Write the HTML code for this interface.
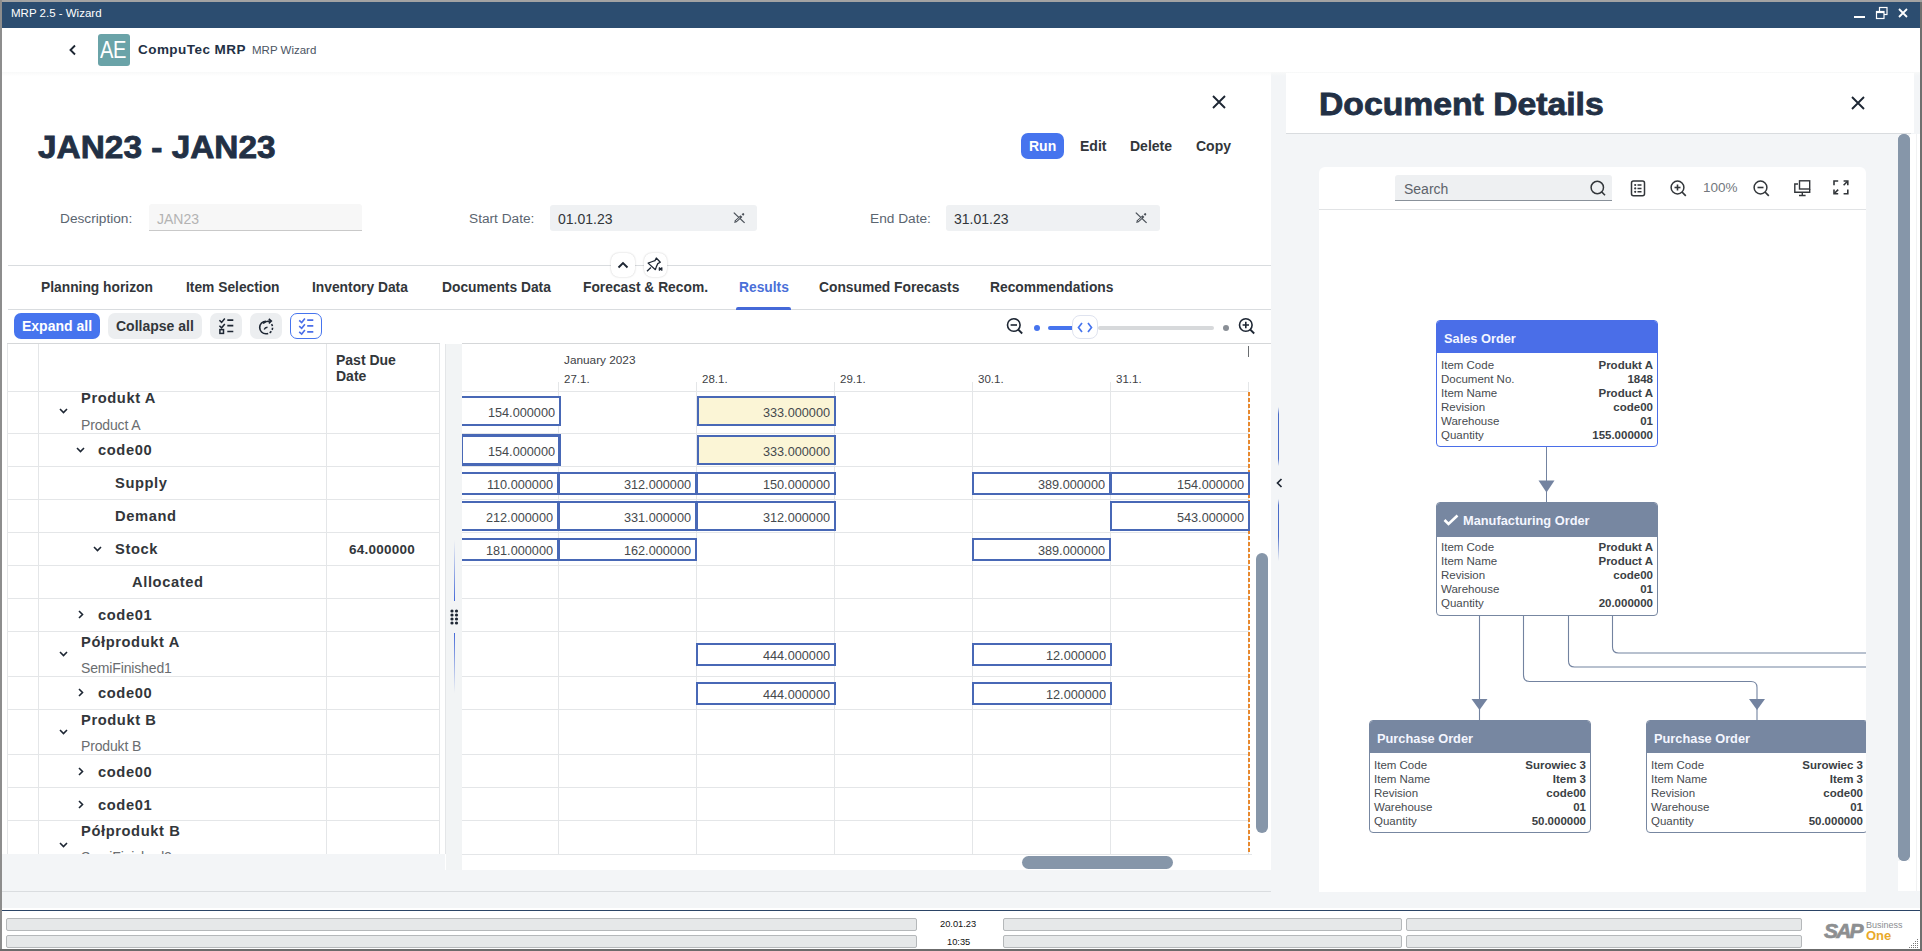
<!DOCTYPE html>
<html><head><meta charset="utf-8"><style>
*{box-sizing:border-box;margin:0;padding:0}
html,body{width:1922px;height:951px;overflow:hidden;background:#fff;font-family:"Liberation Sans",sans-serif;color:#32363a}
.a{position:absolute}
.t{position:absolute;white-space:nowrap;line-height:1}
.tr{position:absolute;white-space:nowrap;line-height:1;text-align:right}
svg{position:absolute;overflow:visible}
</style></head><body>
<div class="a" style="left:0px;top:0px;width:1922px;height:951px;background:#9b9b9b"></div>
<div class="a" style="left:2px;top:2px;width:1918px;height:26px;background:#2c4d70"></div>
<div class="t" style="left:11px;top:8px;font-size:11.5px;color:#fff">MRP 2.5 - Wizard</div>
<div class="a" style="left:1854px;top:16px;width:11px;height:2px;background:#fff"></div>
<svg style="left:1876px;top:7px" width="12" height="12"><rect x="3.5" y="0.5" width="7.5" height="7" fill="none" stroke="#fff" stroke-width="1.2"/><rect x="0.5" y="4.5" width="7.5" height="7" fill="#2c4d70" stroke="#fff" stroke-width="1.2"/><rect x="0.5" y="4.5" width="7.5" height="1.6" fill="#fff"/></svg>
<svg style="left:1898px;top:8px" width="10" height="10"><path d="M1 1L9 9M9 1L1 9" stroke="#fff" stroke-width="1.8"/></svg>
<div class="a" style="left:2px;top:28px;width:1918px;height:923px;background:#fff"></div>
<svg style="left:68px;top:44px" width="10" height="12"><path d="M7 1.5L2.5 6L7 10.5" fill="none" stroke="#1d2633" stroke-width="1.9"/></svg>
<div class="a" style="left:98px;top:34px;width:32px;height:32px;background:#6aa3a8;border-radius:3px"></div>
<div class="t" style="left:100px;top:38px;font-size:24.5px;color:#fff;letter-spacing:-0.5px;transform:scaleX(0.82);transform-origin:0 0;font-weight:normal">AE</div>
<div class="t" style="left:138px;top:43.2px;font-size:13.5px;font-weight:bold;color:#223045;letter-spacing:0.45px">CompuTec MRP</div>
<div class="t" style="left:252px;top:44.6px;font-size:11.5px;color:#4b5563">MRP Wizard</div>
<div class="a" style="left:2px;top:72px;width:1918px;height:836px;background:#f3f5f7"></div>
<div class="a" style="left:2px;top:72px;width:1269px;height:798px;background:#fff"></div>
<div class="a" style="left:2px;top:72px;width:1918px;height:4px;background:linear-gradient(#f8f9f9,rgba(255,255,255,0))"></div>
<svg style="left:1212px;top:95px" width="14" height="14"><path d="M1 1L13 13M13 1L1 13" stroke="#1d2633" stroke-width="1.9"/></svg>
<div class="t" style="left:37.5px;top:132.4px;font-size:30.5px;font-weight:bold;color:#223045;-webkit-text-stroke:0.8px #223045;transform:scaleX(1.095);transform-origin:0 0">JAN23 - JAN23</div>
<div class="a" style="left:1021px;top:133px;width:43px;height:26px;background:#4674ee;border-radius:7px"></div>
<div class="t" style="left:1029px;top:139.2px;font-size:14px;font-weight:bold;color:#fff">Run</div>
<div class="t" style="left:1080px;top:139.2px;font-size:14px;font-weight:bold;color:#32363a">Edit</div>
<div class="t" style="left:1130px;top:139.2px;font-size:14px;font-weight:bold;color:#32363a">Delete</div>
<div class="t" style="left:1196px;top:139.2px;font-size:14px;font-weight:bold;color:#32363a">Copy</div>
<div class="t" style="left:60px;top:212px;font-size:13.7px;color:#5b6570">Description:</div>
<div class="a" style="left:149px;top:204px;width:213px;height:27px;background:#f7f7f7;border-bottom:1px solid #c9c9c9;border-radius:3px 3px 0 0"></div>
<div class="t" style="left:157px;top:212px;font-size:14px;color:#b3b3b3">JAN23</div>
<div class="t" style="left:469px;top:212px;font-size:13.7px;color:#5b6570">Start Date:</div>
<div class="a" style="left:550px;top:205px;width:207px;height:26px;background:#eff1f3;border-radius:3px"></div>
<div class="t" style="left:558px;top:212px;font-size:14px;color:#32363a">01.01.23</div>
<div class="t" style="left:870px;top:212px;font-size:13.7px;color:#5b6570">End Date:</div>
<div class="a" style="left:946px;top:205px;width:214px;height:26px;background:#eff1f3;border-radius:3px"></div>
<div class="t" style="left:954px;top:212px;font-size:14px;color:#32363a">31.01.23</div>
<svg style="left:733px;top:212px" width="13" height="12"><path d="M0.8 0.6L11.6 10.9" stroke="#4a5058" stroke-width="1.3"/><path d="M1.2 11L1.8 8.4L7.6 3.2L9.4 4.9L3.6 10.3Z" fill="#4a5058"/><path d="M8.6 2.3L9.5 1.4Q10.3 0.8 11 1.5Q11.6 2.2 11 3L10.2 3.8Z" fill="#4a5058"/><path d="M2.8 9.2L6.8 5.6" stroke="#eff1f3" stroke-width="0.8"/></svg>
<svg style="left:1135px;top:212px" width="13" height="12"><path d="M0.8 0.6L11.6 10.9" stroke="#4a5058" stroke-width="1.3"/><path d="M1.2 11L1.8 8.4L7.6 3.2L9.4 4.9L3.6 10.3Z" fill="#4a5058"/><path d="M8.6 2.3L9.5 1.4Q10.3 0.8 11 1.5Q11.6 2.2 11 3L10.2 3.8Z" fill="#4a5058"/><path d="M2.8 9.2L6.8 5.6" stroke="#eff1f3" stroke-width="0.8"/></svg>
<div class="a" style="left:8px;top:265px;width:1263px;height:1px;background:#d9dcdf"></div>
<div class="a" style="left:611px;top:253px;width:24px;height:24px;background:#fff;border-radius:8px;box-shadow:0 0 2px rgba(0,0,0,0.22)"></div>
<svg style="left:617px;top:261px" width="12" height="8"><path d="M1.5 6.5L6 2L10.5 6.5" fill="none" stroke="#1d2633" stroke-width="1.9"/></svg>
<div class="a" style="left:644px;top:253px;width:23px;height:24px;background:#fff;border-radius:8px;box-shadow:0 0 2px rgba(0,0,0,0.22)"></div>
<svg style="left:646px;top:257px" width="19" height="16"><path d="M2.1 6.1Q6 4.6 9 3.6L10.3 1L14.3 5.2L11.8 6.6Q10.3 9.2 9.4 12.7Z" fill="none" stroke="#1d2633" stroke-width="1.25" stroke-linejoin="round"/><path d="M1 14.3L4.9 10.5" stroke="#1d2633" stroke-width="1.3"/><path d="M12.8 10.6L16.4 13.4M16.4 10.6L12.8 13.4" stroke="#1d2633" stroke-width="1.4"/></svg>
<div class="t" style="left:41px;top:281.2px;font-size:13.8px;font-weight:bold;color:#32363a">Planning horizon</div>
<div class="t" style="left:186px;top:281.2px;font-size:13.8px;font-weight:bold;color:#32363a">Item Selection</div>
<div class="t" style="left:312px;top:281.2px;font-size:13.8px;font-weight:bold;color:#32363a">Inventory Data</div>
<div class="t" style="left:442px;top:281.2px;font-size:13.8px;font-weight:bold;color:#32363a">Documents Data</div>
<div class="t" style="left:583px;top:281.2px;font-size:13.8px;font-weight:bold;color:#32363a">Forecast &amp; Recom.</div>
<div class="t" style="left:739px;top:281.2px;font-size:13.8px;font-weight:bold;color:#4a6fd8">Results</div>
<div class="t" style="left:819px;top:281.2px;font-size:13.8px;font-weight:bold;color:#32363a">Consumed Forecasts</div>
<div class="t" style="left:990px;top:281.2px;font-size:13.8px;font-weight:bold;color:#32363a">Recommendations</div>
<div class="a" style="left:8px;top:309px;width:1263px;height:1px;background:#d9dcdf"></div>
<div class="a" style="left:736px;top:307px;width:55px;height:3px;background:#4569d8;border-radius:2px 2px 0 0"></div>
<div class="a" style="left:14px;top:313px;width:86px;height:26px;background:#4674ee;border-radius:7px"></div>
<div class="t" style="left:22px;top:319px;font-size:14px;font-weight:bold;color:#fff">Expand all</div>
<div class="a" style="left:108px;top:313px;width:94px;height:26px;background:#eceef0;border-radius:7px"></div>
<div class="t" style="left:116px;top:319px;font-size:14px;font-weight:bold;color:#32363a">Collapse all</div>
<div class="a" style="left:210px;top:313px;width:32px;height:26px;background:#eceef0;border-radius:7px"></div>
<div class="a" style="left:250px;top:313px;width:32px;height:26px;background:#eceef0;border-radius:7px"></div>
<div class="a" style="left:290px;top:313px;width:32px;height:26px;background:#fff;border:1px solid #4674ee;border-radius:7px"></div>
<svg style="left:218px;top:318px" width="17" height="17"><path d="M1.4 2.3L3.6 4.4L6.8 0.5M1.4 7.7L3.6 9.8L6.8 5.9" fill="none" stroke="#1d2633" stroke-width="1.5"/><rect x="1.9" y="11.6" width="3.6" height="3.8" fill="none" stroke="#1d2633" stroke-width="1.5"/><path d="M9.3 2.1H15.3M9.3 7.6H15.3M9.3 13.5H15.3" stroke="#1d2633" stroke-width="1.7"/></svg>
<svg style="left:258px;top:318px" width="17" height="17"><path d="M8 3.2A6.3 6.3 0 0 0 8 15.8" fill="none" stroke="#1d2633" stroke-width="1.6"/><path d="M8 15.8A6.3 6.3 0 0 0 13.5 6" fill="none" stroke="#1d2633" stroke-width="1.6" stroke-dasharray="2.2 1.6"/><path d="M5 5.5Q7.5 3 12.5 3" fill="none" stroke="#1d2633" stroke-width="1.6"/><path d="M10.8 0.8L13.3 3L10.8 5.3" fill="none" stroke="#1d2633" stroke-width="1.6"/><path d="M6.2 11.5Q7 9.5 9.5 9.2" fill="none" stroke="#1d2633" stroke-width="1.4"/></svg>
<svg style="left:298px;top:318px" width="17" height="17"><path d="M1.2 2.4L3.7 4.6L6.9 0.6M1.2 8.1L3.7 10.3L6.9 6.3M1.2 13.8L3.7 16L6.9 12" fill="none" stroke="#4a6ee8" stroke-width="1.6"/><path d="M9.2 2.1H15.3M9.2 7.9H15.3M9.2 13.8H15.3" stroke="#4a6ee8" stroke-width="1.7"/></svg>
<div class="a" style="left:7px;top:344px;width:439px;height:510px;background:#fff"></div>
<div class="a" style="left:7px;top:343px;width:433px;height:1px;background:#d5d7d9"></div>
<div class="a" style="left:7px;top:344px;width:1px;height:510px;background:#e4e6e8"></div>
<div class="a" style="left:38px;top:344px;width:1px;height:510px;background:#e4e6e8"></div>
<div class="a" style="left:326px;top:344px;width:1px;height:510px;background:#e4e6e8"></div>
<div class="a" style="left:439px;top:344px;width:1px;height:510px;background:#e4e6e8"></div>
<div class="a" style="left:445px;top:344px;width:1px;height:510px;background:#e4e6e8"></div>
<div class="t" style="left:336px;top:353px;font-size:14px;font-weight:bold;color:#32363a">Past Due</div>
<div class="t" style="left:336px;top:369px;font-size:14px;font-weight:bold;color:#32363a">Date</div>
<div class="a" style="left:7px;top:391px;width:433px;height:1px;background:#e4e6e8"></div>
<div class="a" style="left:7px;top:433px;width:433px;height:1px;background:#e4e6e8"></div>
<div class="a" style="left:7px;top:466px;width:433px;height:1px;background:#e4e6e8"></div>
<div class="a" style="left:7px;top:499px;width:433px;height:1px;background:#e4e6e8"></div>
<div class="a" style="left:7px;top:532px;width:433px;height:1px;background:#e4e6e8"></div>
<div class="a" style="left:7px;top:565px;width:433px;height:1px;background:#e4e6e8"></div>
<div class="a" style="left:7px;top:598px;width:433px;height:1px;background:#e4e6e8"></div>
<div class="a" style="left:7px;top:631px;width:433px;height:1px;background:#e4e6e8"></div>
<div class="a" style="left:7px;top:676px;width:433px;height:1px;background:#e4e6e8"></div>
<div class="a" style="left:7px;top:709px;width:433px;height:1px;background:#e4e6e8"></div>
<div class="a" style="left:7px;top:754px;width:433px;height:1px;background:#e4e6e8"></div>
<div class="a" style="left:7px;top:787px;width:433px;height:1px;background:#e4e6e8"></div>
<div class="a" style="left:7px;top:820px;width:433px;height:1px;background:#e4e6e8"></div>
<div class="t" style="left:81px;top:391.2px;font-size:14.7px;font-weight:bold;color:#32363a;letter-spacing:0.6px">Produkt A</div>
<div class="t" style="left:81px;top:418.1px;font-size:14px;color:#6a6d70;letter-spacing:-0.15px">Product A</div>
<svg style="left:59px;top:408px" width="9" height="6"><path d="M1 1L4.5 4.5L8 1" fill="none" stroke="#1d2633" stroke-width="1.6"/></svg>
<div class="t" style="left:98px;top:442.6px;font-size:14.7px;font-weight:bold;color:#32363a;letter-spacing:0.6px">code00</div>
<svg style="left:76px;top:447px" width="9" height="6"><path d="M1 1L4.5 4.5L8 1" fill="none" stroke="#1d2633" stroke-width="1.6"/></svg>
<div class="t" style="left:115px;top:475.6px;font-size:14.7px;font-weight:bold;color:#32363a;letter-spacing:0.6px">Supply</div>
<div class="t" style="left:115px;top:508.6px;font-size:14.7px;font-weight:bold;color:#32363a;letter-spacing:0.6px">Demand</div>
<div class="t" style="left:115px;top:541.6px;font-size:14.7px;font-weight:bold;color:#32363a;letter-spacing:0.6px">Stock</div>
<svg style="left:93px;top:546px" width="9" height="6"><path d="M1 1L4.5 4.5L8 1" fill="none" stroke="#1d2633" stroke-width="1.6"/></svg>
<div class="t" style="left:132px;top:574.6px;font-size:14.7px;font-weight:bold;color:#32363a;letter-spacing:0.6px">Allocated</div>
<div class="t" style="left:98px;top:607.6px;font-size:14.7px;font-weight:bold;color:#32363a;letter-spacing:0.6px">code01</div>
<svg style="left:78px;top:610px" width="6" height="9"><path d="M1 1L4.5 4.5L1 8" fill="none" stroke="#1d2633" stroke-width="1.6"/></svg>
<div class="t" style="left:81px;top:634.6px;font-size:14.7px;font-weight:bold;color:#32363a;letter-spacing:0.6px">Półprodukt A</div>
<div class="t" style="left:81px;top:661.1px;font-size:14px;color:#6a6d70;letter-spacing:-0.15px">SemiFinished1</div>
<svg style="left:59px;top:651px" width="9" height="6"><path d="M1 1L4.5 4.5L8 1" fill="none" stroke="#1d2633" stroke-width="1.6"/></svg>
<div class="t" style="left:98px;top:685.6px;font-size:14.7px;font-weight:bold;color:#32363a;letter-spacing:0.6px">code00</div>
<svg style="left:78px;top:688px" width="6" height="9"><path d="M1 1L4.5 4.5L1 8" fill="none" stroke="#1d2633" stroke-width="1.6"/></svg>
<div class="t" style="left:81px;top:712.6px;font-size:14.7px;font-weight:bold;color:#32363a;letter-spacing:0.6px">Produkt B</div>
<div class="t" style="left:81px;top:739.1px;font-size:14px;color:#6a6d70;letter-spacing:-0.15px">Produkt B</div>
<svg style="left:59px;top:729px" width="9" height="6"><path d="M1 1L4.5 4.5L8 1" fill="none" stroke="#1d2633" stroke-width="1.6"/></svg>
<div class="t" style="left:98px;top:764.6px;font-size:14.7px;font-weight:bold;color:#32363a;letter-spacing:0.6px">code00</div>
<svg style="left:78px;top:767px" width="6" height="9"><path d="M1 1L4.5 4.5L1 8" fill="none" stroke="#1d2633" stroke-width="1.6"/></svg>
<div class="t" style="left:98px;top:797.6px;font-size:14.7px;font-weight:bold;color:#32363a;letter-spacing:0.6px">code01</div>
<svg style="left:78px;top:800px" width="6" height="9"><path d="M1 1L4.5 4.5L1 8" fill="none" stroke="#1d2633" stroke-width="1.6"/></svg>
<div class="t" style="left:81px;top:823.6px;font-size:14.7px;font-weight:bold;color:#32363a;letter-spacing:0.6px">Półprodukt B</div>
<svg style="left:59px;top:842px" width="9" height="6"><path d="M1 1L4.5 4.5L8 1" fill="none" stroke="#1d2633" stroke-width="1.6"/></svg>
<div class="t" style="left:81px;top:850.1px;font-size:14px;color:#6a6d70;letter-spacing:-0.15px">SemiFinished2</div>
<div class="t" style="left:349px;top:542.6px;font-size:13.5px;font-weight:bold;color:#32363a;letter-spacing:0.25px">64.000000</div>
<div class="a" style="left:2px;top:854px;width:443px;height:16px;background:#f3f5f7"></div>
<div class="a" style="left:446px;top:344px;width:16px;height:526px;background:#f2f4f5"></div>
<div class="a" style="left:454px;top:540px;width:1px;height:61px;background:linear-gradient(#f2f4f5,#4569d8)"></div>
<div class="a" style="left:454px;top:633px;width:1px;height:60px;background:linear-gradient(#4569d8,#f2f4f5)"></div>
<svg style="left:450px;top:609px" width="9" height="16"><circle cx="2" cy="2" r="1.6" fill="#1d2633"/><circle cx="2" cy="6" r="1.6" fill="#1d2633"/><circle cx="2" cy="10" r="1.6" fill="#1d2633"/><circle cx="2" cy="14" r="1.6" fill="#1d2633"/><circle cx="6.5" cy="2" r="1.6" fill="#1d2633"/><circle cx="6.5" cy="6" r="1.6" fill="#1d2633"/><circle cx="6.5" cy="10" r="1.6" fill="#1d2633"/><circle cx="6.5" cy="14" r="1.6" fill="#1d2633"/></svg>
<div class="a" style="left:462px;top:344px;width:790px;height:527px;background:#fff"></div>
<div class="a" style="left:462px;top:343px;width:809px;height:1px;background:#d5d7d9"></div>
<div class="a" style="left:462px;top:391px;width:787px;height:1px;background:#e4e6e8"></div>
<div class="a" style="left:558px;top:382px;width:1px;height:472px;background:#e4e6e8"></div>
<div class="a" style="left:696px;top:382px;width:1px;height:472px;background:#e4e6e8"></div>
<div class="a" style="left:834px;top:382px;width:1px;height:472px;background:#e4e6e8"></div>
<div class="a" style="left:972px;top:382px;width:1px;height:472px;background:#e4e6e8"></div>
<div class="a" style="left:1110px;top:382px;width:1px;height:472px;background:#e4e6e8"></div>
<div class="a" style="left:1248px;top:382px;width:1px;height:472px;background:#e4e6e8"></div>
<div class="a" style="left:462px;top:433px;width:787px;height:1px;background:#e4e6e8"></div>
<div class="a" style="left:462px;top:466px;width:787px;height:1px;background:#e4e6e8"></div>
<div class="a" style="left:462px;top:499px;width:787px;height:1px;background:#e4e6e8"></div>
<div class="a" style="left:462px;top:532px;width:787px;height:1px;background:#e4e6e8"></div>
<div class="a" style="left:462px;top:565px;width:787px;height:1px;background:#e4e6e8"></div>
<div class="a" style="left:462px;top:598px;width:787px;height:1px;background:#e4e6e8"></div>
<div class="a" style="left:462px;top:631px;width:787px;height:1px;background:#e4e6e8"></div>
<div class="a" style="left:462px;top:676px;width:787px;height:1px;background:#e4e6e8"></div>
<div class="a" style="left:462px;top:709px;width:787px;height:1px;background:#e4e6e8"></div>
<div class="a" style="left:462px;top:754px;width:787px;height:1px;background:#e4e6e8"></div>
<div class="a" style="left:462px;top:787px;width:787px;height:1px;background:#e4e6e8"></div>
<div class="a" style="left:462px;top:820px;width:787px;height:1px;background:#e4e6e8"></div>
<div class="a" style="left:462px;top:854px;width:790px;height:1px;background:#e4e6e8"></div>
<div class="t" style="left:564px;top:355px;font-size:11.8px;color:#3d4145">January 2023</div>
<div class="t" style="left:564px;top:374px;font-size:11.5px;color:#3d4145">27.1.</div>
<div class="t" style="left:702px;top:374px;font-size:11.5px;color:#3d4145">28.1.</div>
<div class="t" style="left:840px;top:374px;font-size:11.5px;color:#3d4145">29.1.</div>
<div class="t" style="left:978px;top:374px;font-size:11.5px;color:#3d4145">30.1.</div>
<div class="t" style="left:1116px;top:374px;font-size:11.5px;color:#3d4145">31.1.</div>
<div class="a" style="left:1248px;top:346px;width:1px;height:11px;background:#6a6d70"></div>
<div class="a" style="left:1248px;top:392px;width:2px;height:462px;background:repeating-linear-gradient(#e8892e 0 4px,rgba(255,255,255,0) 4px 6px)"></div>
<div class="a" style="left:460px;top:396px;width:101px;height:30px;background:#fff;border:2px solid #4868b6"></div>
<div class="t" style="left:475px;top:405.6px;font-size:13.5px;color:#45494d;width:80px;text-align:right;transform:scaleX(0.94);transform-origin:100% 0">154.000000</div>
<div class="a" style="left:697px;top:396px;width:139px;height:30px;background:#fbf5d6;border:2px solid #4868b6"></div>
<div class="t" style="left:750px;top:405.6px;font-size:13.5px;color:#45494d;width:80px;text-align:right;transform:scaleX(0.94);transform-origin:100% 0">333.000000</div>
<div class="a" style="left:460px;top:434px;width:101px;height:32px;background:#fff;border:3px solid #4868b6"></div>
<div class="t" style="left:475px;top:444.6px;font-size:13.5px;color:#45494d;width:80px;text-align:right;transform:scaleX(0.94);transform-origin:100% 0">154.000000</div>
<div class="a" style="left:697px;top:435px;width:139px;height:30px;background:#fbf5d6;border:2px solid #4868b6"></div>
<div class="t" style="left:750px;top:444.6px;font-size:13.5px;color:#45494d;width:80px;text-align:right;transform:scaleX(0.94);transform-origin:100% 0">333.000000</div>
<div class="a" style="left:460px;top:472px;width:99px;height:23px;background:#fff;border:2px solid #4868b6"></div>
<div class="t" style="left:473px;top:478.1px;font-size:13.5px;color:#45494d;width:80px;text-align:right;transform:scaleX(0.94);transform-origin:100% 0">110.000000</div>
<div class="a" style="left:558px;top:472px;width:139px;height:23px;background:#fff;border:2px solid #4868b6"></div>
<div class="t" style="left:611px;top:478.1px;font-size:13.5px;color:#45494d;width:80px;text-align:right;transform:scaleX(0.94);transform-origin:100% 0">312.000000</div>
<div class="a" style="left:696px;top:472px;width:140px;height:23px;background:#fff;border:2px solid #4868b6"></div>
<div class="t" style="left:750px;top:478.1px;font-size:13.5px;color:#45494d;width:80px;text-align:right;transform:scaleX(0.94);transform-origin:100% 0">150.000000</div>
<div class="a" style="left:972px;top:472px;width:139px;height:23px;background:#fff;border:2px solid #4868b6"></div>
<div class="t" style="left:1025px;top:478.1px;font-size:13.5px;color:#45494d;width:80px;text-align:right;transform:scaleX(0.94);transform-origin:100% 0">389.000000</div>
<div class="a" style="left:1110px;top:472px;width:140px;height:23px;background:#fff;border:2px solid #4868b6"></div>
<div class="t" style="left:1164px;top:478.1px;font-size:13.5px;color:#45494d;width:80px;text-align:right;transform:scaleX(0.94);transform-origin:100% 0">154.000000</div>
<div class="a" style="left:460px;top:501px;width:99px;height:30px;background:#fff;border:2px solid #4868b6"></div>
<div class="t" style="left:473px;top:510.6px;font-size:13.5px;color:#45494d;width:80px;text-align:right;transform:scaleX(0.94);transform-origin:100% 0">212.000000</div>
<div class="a" style="left:558px;top:501px;width:139px;height:30px;background:#fff;border:2px solid #4868b6"></div>
<div class="t" style="left:611px;top:510.6px;font-size:13.5px;color:#45494d;width:80px;text-align:right;transform:scaleX(0.94);transform-origin:100% 0">331.000000</div>
<div class="a" style="left:696px;top:501px;width:140px;height:30px;background:#fff;border:2px solid #4868b6"></div>
<div class="t" style="left:750px;top:510.6px;font-size:13.5px;color:#45494d;width:80px;text-align:right;transform:scaleX(0.94);transform-origin:100% 0">312.000000</div>
<div class="a" style="left:1110px;top:501px;width:140px;height:30px;background:#fff;border:2px solid #4868b6"></div>
<div class="t" style="left:1164px;top:510.6px;font-size:13.5px;color:#45494d;width:80px;text-align:right;transform:scaleX(0.94);transform-origin:100% 0">543.000000</div>
<div class="a" style="left:460px;top:538px;width:99px;height:23px;background:#fff;border:2px solid #4868b6"></div>
<div class="t" style="left:473px;top:544.1px;font-size:13.5px;color:#45494d;width:80px;text-align:right;transform:scaleX(0.94);transform-origin:100% 0">181.000000</div>
<div class="a" style="left:558px;top:538px;width:139px;height:23px;background:#fff;border:2px solid #4868b6"></div>
<div class="t" style="left:611px;top:544.1px;font-size:13.5px;color:#45494d;width:80px;text-align:right;transform:scaleX(0.94);transform-origin:100% 0">162.000000</div>
<div class="a" style="left:972px;top:538px;width:139px;height:23px;background:#fff;border:2px solid #4868b6"></div>
<div class="t" style="left:1025px;top:544.1px;font-size:13.5px;color:#45494d;width:80px;text-align:right;transform:scaleX(0.94);transform-origin:100% 0">389.000000</div>
<div class="a" style="left:696px;top:643px;width:140px;height:23px;background:#fff;border:2px solid #4868b6"></div>
<div class="t" style="left:750px;top:649.1px;font-size:13.5px;color:#45494d;width:80px;text-align:right;transform:scaleX(0.94);transform-origin:100% 0">444.000000</div>
<div class="a" style="left:972px;top:643px;width:140px;height:23px;background:#fff;border:2px solid #4868b6"></div>
<div class="t" style="left:1026px;top:649.1px;font-size:13.5px;color:#45494d;width:80px;text-align:right;transform:scaleX(0.94);transform-origin:100% 0">12.000000</div>
<div class="a" style="left:696px;top:682px;width:140px;height:23px;background:#fff;border:2px solid #4868b6"></div>
<div class="t" style="left:750px;top:688.1px;font-size:13.5px;color:#45494d;width:80px;text-align:right;transform:scaleX(0.94);transform-origin:100% 0">444.000000</div>
<div class="a" style="left:972px;top:682px;width:140px;height:23px;background:#fff;border:2px solid #4868b6"></div>
<div class="t" style="left:1026px;top:688.1px;font-size:13.5px;color:#45494d;width:80px;text-align:right;transform:scaleX(0.94);transform-origin:100% 0">12.000000</div>
<div class="a" style="left:446px;top:344px;width:16px;height:526px;background:#f2f4f5"></div>
<div class="a" style="left:454px;top:540px;width:1px;height:61px;background:linear-gradient(#f2f4f5,#4569d8)"></div>
<div class="a" style="left:454px;top:633px;width:1px;height:60px;background:linear-gradient(#4569d8,#f2f4f5)"></div>
<svg style="left:450px;top:609px" width="9" height="16"><circle cx="2" cy="2" r="1.6" fill="#1d2633"/><circle cx="2" cy="6" r="1.6" fill="#1d2633"/><circle cx="2" cy="10" r="1.6" fill="#1d2633"/><circle cx="2" cy="14" r="1.6" fill="#1d2633"/><circle cx="6.5" cy="2" r="1.6" fill="#1d2633"/><circle cx="6.5" cy="6" r="1.6" fill="#1d2633"/><circle cx="6.5" cy="10" r="1.6" fill="#1d2633"/><circle cx="6.5" cy="14" r="1.6" fill="#1d2633"/></svg>
<div class="a" style="left:1256px;top:553px;width:12px;height:280px;background:#8696a9;border-radius:6px"></div>
<div class="a" style="left:1022px;top:856px;width:151px;height:13px;background:#8696a9;border-radius:6.5px"></div>
<div class="a" style="left:2px;top:870px;width:1269px;height:38px;background:#f3f5f7"></div>
<div class="a" style="left:2px;top:891px;width:1269px;height:1px;background:#dadde0"></div>
<div class="a" style="left:1278px;top:407px;width:1px;height:59px;background:linear-gradient(#f3f5f7,#4a6cc8 12%,#4a6cc8 88%,#f3f5f7)"></div>
<div class="a" style="left:1278px;top:499px;width:1px;height:62px;background:linear-gradient(#f3f5f7,#4a6cc8 10%,#4a6cc8 60%,#f3f5f7)"></div>
<svg style="left:1276px;top:478px" width="7" height="10"><path d="M5.5 1L1.5 5L5.5 9" fill="none" stroke="#1d2633" stroke-width="1.7"/></svg>
<div class="a" style="left:1286px;top:73px;width:628px;height:60px;background:#fff"></div>
<div class="a" style="left:1286px;top:133px;width:625px;height:1px;background:#d9dcdf"></div>
<div class="a" style="left:1910px;top:134px;width:10px;height:757px;background:#fff"></div>
<div class="a" style="left:1916px;top:134px;width:1px;height:757px;background:#f1f2f3"></div>
<div class="a" style="left:1920px;top:0px;width:2px;height:951px;background:#6f6f6f"></div>
<div class="a" style="left:0px;top:0px;width:1922px;height:2px;background:#a3a3a3"></div>
<div class="a" style="left:0px;top:0px;width:2px;height:951px;background:#8d8d8d"></div>
<div class="t" style="left:1319px;top:89.2px;font-size:30.5px;font-weight:bold;color:#223045;-webkit-text-stroke:0.8px #223045;transform:scaleX(1.105);transform-origin:0 0">Document Details</div>
<svg style="left:1851px;top:96px" width="14" height="14"><path d="M1 1L13 13M13 1L1 13" stroke="#1d2633" stroke-width="1.9"/></svg>
<div class="a" style="left:1898px;top:134px;width:12px;height:727px;background:#8696a9;border-radius:6px"></div>
<div class="a" style="left:1898px;top:861px;width:12px;height:30px;background:#fff"></div>
<div class="a" style="left:1319px;top:166.5px;width:547px;height:725.5px;background:#fff;border-radius:6px 6px 0 0"></div>
<div class="a" style="left:1319px;top:209px;width:547px;height:1px;background:#e1e3e5"></div>
<div class="a" style="left:1395px;top:175px;width:217px;height:26px;background:#eef0f2;border-bottom:1px solid #89919a;border-radius:3px 3px 0 0"></div>
<div class="t" style="left:1404px;top:182px;font-size:14px;color:#5d636b">Search</div>
<svg style="left:1589px;top:180px" width="18" height="17"><circle cx="8.3" cy="7.5" r="6.2" fill="none" stroke="#32363a" stroke-width="1.5"/><path d="M12.8 12L16 15.3" stroke="#32363a" stroke-width="1.6"/></svg>
<svg style="left:1630px;top:180px" width="16" height="17"><rect x="1.5" y="1" width="13" height="14.8" rx="2" fill="none" stroke="#32363a" stroke-width="1.5"/><circle cx="5.2" cy="5" r="1.1" fill="#32363a"/><circle cx="5.2" cy="8.4" r="1.1" fill="#32363a"/><circle cx="5.2" cy="11.8" r="1.1" fill="#32363a"/><path d="M7.5 5H11.5M7.5 8.4H11.5M7.5 11.8H11.5" stroke="#32363a" stroke-width="1.5"/></svg>
<svg style="left:1670px;top:180px" width="18" height="18"><circle cx="7.5" cy="7.5" r="6.4" fill="none" stroke="#32363a" stroke-width="1.5"/><path d="M12 12L15.8 15.8" stroke="#32363a" stroke-width="1.7"/><path d="M4.5 7.5H10.5" stroke="#32363a" stroke-width="1.6"/><path d="M7.5 4.5V10.5" stroke="#32363a" stroke-width="1.6"/></svg>
<svg style="left:1753px;top:180px" width="18" height="18"><circle cx="7.5" cy="7.5" r="6.4" fill="none" stroke="#32363a" stroke-width="1.5"/><path d="M12 12L15.8 15.8" stroke="#32363a" stroke-width="1.7"/><path d="M4.5 7.5H10.5" stroke="#32363a" stroke-width="1.6"/></svg>
<div class="t" style="left:1703px;top:181px;font-size:13.5px;color:#73787e">100%</div>
<svg style="left:1794px;top:180px" width="17" height="17"><rect x="5.5" y="0.8" width="10.2" height="8.2" fill="none" stroke="#32363a" stroke-width="1.4"/><path d="M4 4H0.8V12.3H15.7V9" fill="none" stroke="#32363a" stroke-width="1.4"/><path d="M8.3 12.5V15.3M5 15.5H11.6" stroke="#32363a" stroke-width="1.4"/></svg>
<svg style="left:1833px;top:180px" width="16" height="15"><path d="M1 5.2V1H5.2M10.6 1H14.8V5.2M14.8 9.6V13.8H10.6M5.2 13.8H1V9.6" fill="none" stroke="#32363a" stroke-width="1.6"/><path d="M14.3 1.5L10.6 5.2M1.5 13.3L5.2 9.6" stroke="#32363a" stroke-width="1.6"/></svg>
<div class="a" style="left:1436px;top:320px;width:222px;height:127px;background:#fff;border:1px solid #4a6ee8;border-radius:4px;overflow:hidden"><div style="position:absolute;left:0;top:0;right:0;height:32px;background:#4a6ee8"></div></div>
<div class="t" style="left:1444px;top:333px;font-size:12.8px;font-weight:bold;color:#f4f6ff">Sales Order</div>
<div class="t" style="left:1441px;top:359.7px;font-size:11.5px;color:#474b50">Item Code</div>
<div class="t" style="left:1533px;top:359.7px;font-size:11.5px;font-weight:bold;color:#3b3f44;width:120px;text-align:right">Produkt A</div>
<div class="t" style="left:1441px;top:373.7px;font-size:11.5px;color:#474b50">Document No.</div>
<div class="t" style="left:1533px;top:373.7px;font-size:11.5px;font-weight:bold;color:#3b3f44;width:120px;text-align:right">1848</div>
<div class="t" style="left:1441px;top:387.7px;font-size:11.5px;color:#474b50">Item Name</div>
<div class="t" style="left:1533px;top:387.7px;font-size:11.5px;font-weight:bold;color:#3b3f44;width:120px;text-align:right">Product A</div>
<div class="t" style="left:1441px;top:401.7px;font-size:11.5px;color:#474b50">Revision</div>
<div class="t" style="left:1533px;top:401.7px;font-size:11.5px;font-weight:bold;color:#3b3f44;width:120px;text-align:right">code00</div>
<div class="t" style="left:1441px;top:415.7px;font-size:11.5px;color:#474b50">Warehouse</div>
<div class="t" style="left:1533px;top:415.7px;font-size:11.5px;font-weight:bold;color:#3b3f44;width:120px;text-align:right">01</div>
<div class="t" style="left:1441px;top:429.7px;font-size:11.5px;color:#474b50">Quantity</div>
<div class="t" style="left:1533px;top:429.7px;font-size:11.5px;font-weight:bold;color:#3b3f44;width:120px;text-align:right">155.000000</div>
<div class="a" style="left:1546px;top:447px;width:1px;height:55px;background:#7383a0"></div>
<svg style="left:1538px;top:480px" width="17" height="13"><path d="M0.5 0.5H16.5L8.5 12.5Z" fill="#7383a0"/></svg>
<div class="a" style="left:1436px;top:502px;width:222px;height:114px;background:#fff;border:1px solid #7787a1;border-radius:4px;overflow:hidden"><div style="position:absolute;left:0;top:0;right:0;height:34px;background:#7787a1"></div></div>
<svg style="left:1443px;top:514px" width="16" height="12"><path d="M1.5 6L5.5 10L14.5 1.5" fill="none" stroke="#fff" stroke-width="2.6"/></svg>
<div class="t" style="left:1463px;top:515px;font-size:12.8px;font-weight:bold;color:#f4f6ff">Manufacturing Order</div>
<div class="t" style="left:1441px;top:541.7px;font-size:11.5px;color:#474b50">Item Code</div>
<div class="t" style="left:1533px;top:541.7px;font-size:11.5px;font-weight:bold;color:#3b3f44;width:120px;text-align:right">Produkt A</div>
<div class="t" style="left:1441px;top:555.7px;font-size:11.5px;color:#474b50">Item Name</div>
<div class="t" style="left:1533px;top:555.7px;font-size:11.5px;font-weight:bold;color:#3b3f44;width:120px;text-align:right">Product A</div>
<div class="t" style="left:1441px;top:569.7px;font-size:11.5px;color:#474b50">Revision</div>
<div class="t" style="left:1533px;top:569.7px;font-size:11.5px;font-weight:bold;color:#3b3f44;width:120px;text-align:right">code00</div>
<div class="t" style="left:1441px;top:583.7px;font-size:11.5px;color:#474b50">Warehouse</div>
<div class="t" style="left:1533px;top:583.7px;font-size:11.5px;font-weight:bold;color:#3b3f44;width:120px;text-align:right">01</div>
<div class="t" style="left:1441px;top:597.7px;font-size:11.5px;color:#474b50">Quantity</div>
<div class="t" style="left:1533px;top:597.7px;font-size:11.5px;font-weight:bold;color:#3b3f44;width:120px;text-align:right">20.000000</div>
<svg style="left:1319px;top:616px" width="547" height="110"><g fill="none" stroke="#7383a0" stroke-width="1.1"><path d="M160.5 0V104"/><path d="M204.5 0V59Q204.5 65.5 210.5 65.5H432Q438 65.5 438 71.5V104"/><path d="M249.5 0V45Q249.5 51 255.5 51H547"/><path d="M293.5 0V31Q293.5 37 299.5 37H547"/></g><path d="M152.5 83H168.5L160.5 94Z" fill="#7383a0"/><path d="M430 83H446L438 94Z" fill="#7383a0"/></svg>
<div class="a" style="left:1369px;top:720px;width:222px;height:113px;background:#fff;border:1px solid #7787a1;border-radius:4px;overflow:hidden"><div style="position:absolute;left:0;top:0;right:0;height:32px;background:#7787a1"></div></div>
<div class="t" style="left:1377px;top:733px;font-size:12.8px;font-weight:bold;color:#f4f6ff">Purchase Order</div>
<div class="t" style="left:1374px;top:759.7px;font-size:11.5px;color:#474b50">Item Code</div>
<div class="t" style="left:1466px;top:759.7px;font-size:11.5px;font-weight:bold;color:#3b3f44;width:120px;text-align:right">Surowiec 3</div>
<div class="t" style="left:1374px;top:773.7px;font-size:11.5px;color:#474b50">Item Name</div>
<div class="t" style="left:1466px;top:773.7px;font-size:11.5px;font-weight:bold;color:#3b3f44;width:120px;text-align:right">Item 3</div>
<div class="t" style="left:1374px;top:787.7px;font-size:11.5px;color:#474b50">Revision</div>
<div class="t" style="left:1466px;top:787.7px;font-size:11.5px;font-weight:bold;color:#3b3f44;width:120px;text-align:right">code00</div>
<div class="t" style="left:1374px;top:801.7px;font-size:11.5px;color:#474b50">Warehouse</div>
<div class="t" style="left:1466px;top:801.7px;font-size:11.5px;font-weight:bold;color:#3b3f44;width:120px;text-align:right">01</div>
<div class="t" style="left:1374px;top:815.7px;font-size:11.5px;color:#474b50">Quantity</div>
<div class="t" style="left:1466px;top:815.7px;font-size:11.5px;font-weight:bold;color:#3b3f44;width:120px;text-align:right">50.000000</div>
<div class="a" style="left:1646px;top:720px;width:220px;height:113px;overflow:hidden">
</div>
<div class="a" style="left:1646px;top:720px;width:222px;height:113px;background:#fff;border:1px solid #7787a1;border-radius:4px;overflow:hidden"><div style="position:absolute;left:0;top:0;right:0;height:32px;background:#7787a1"></div></div>
<div class="t" style="left:1654px;top:733px;font-size:12.8px;font-weight:bold;color:#f4f6ff">Purchase Order</div>
<div class="t" style="left:1651px;top:759.7px;font-size:11.5px;color:#474b50">Item Code</div>
<div class="t" style="left:1743px;top:759.7px;font-size:11.5px;font-weight:bold;color:#3b3f44;width:120px;text-align:right">Surowiec 3</div>
<div class="t" style="left:1651px;top:773.7px;font-size:11.5px;color:#474b50">Item Name</div>
<div class="t" style="left:1743px;top:773.7px;font-size:11.5px;font-weight:bold;color:#3b3f44;width:120px;text-align:right">Item 3</div>
<div class="t" style="left:1651px;top:787.7px;font-size:11.5px;color:#474b50">Revision</div>
<div class="t" style="left:1743px;top:787.7px;font-size:11.5px;font-weight:bold;color:#3b3f44;width:120px;text-align:right">code00</div>
<div class="t" style="left:1651px;top:801.7px;font-size:11.5px;color:#474b50">Warehouse</div>
<div class="t" style="left:1743px;top:801.7px;font-size:11.5px;font-weight:bold;color:#3b3f44;width:120px;text-align:right">01</div>
<div class="t" style="left:1651px;top:815.7px;font-size:11.5px;color:#474b50">Quantity</div>
<div class="t" style="left:1743px;top:815.7px;font-size:11.5px;font-weight:bold;color:#3b3f44;width:120px;text-align:right">50.000000</div>
<div class="a" style="left:1866px;top:134px;width:32px;height:758px;background:#f3f5f7"></div>
<div class="a" style="left:1898px;top:134px;width:12px;height:727px;background:#8696a9;border-radius:6px"></div>
<div class="a" style="left:2px;top:910px;width:1918px;height:1px;background:#2b4466"></div>
<div class="a" style="left:2px;top:911px;width:1918px;height:38px;background:#fff"></div>
<div class="a" style="left:0px;top:949px;width:1922px;height:2px;background:#6b6b6b"></div>
<div class="a" style="left:6px;top:918px;width:911px;height:13px;background:#e6e8e9;border:1px solid #b5b8ba;border-radius:2px"></div>
<div class="a" style="left:6px;top:935px;width:911px;height:13px;background:#e6e8e9;border:1px solid #b5b8ba;border-radius:2px"></div>
<div class="a" style="left:1003px;top:918px;width:399px;height:13px;background:#e6e8e9;border:1px solid #b5b8ba;border-radius:2px"></div>
<div class="a" style="left:1003px;top:935px;width:399px;height:13px;background:#e6e8e9;border:1px solid #b5b8ba;border-radius:2px"></div>
<div class="a" style="left:1406px;top:918px;width:396px;height:13px;background:#e6e8e9;border:1px solid #b5b8ba;border-radius:2px"></div>
<div class="a" style="left:1406px;top:935px;width:396px;height:13px;background:#e6e8e9;border:1px solid #b5b8ba;border-radius:2px"></div>
<div class="t" style="left:940px;top:920px;font-size:9.3px;color:#111">20.01.23</div>
<div class="t" style="left:947px;top:937.5px;font-size:9.3px;color:#111">10:35</div>
<div class="t" style="left:1824px;top:920px;font-size:21px;font-weight:bold;font-style:italic;color:#8d8f91;letter-spacing:-1.8px;-webkit-text-stroke:0.7px #8d8f91">SAP</div>
<div class="t" style="left:1866px;top:921px;font-size:9px;color:#8a8d90">Business</div>
<div class="t" style="left:1866px;top:929px;font-size:13px;font-weight:bold;color:#e9a92a">One</div>
<svg style="left:1908px;top:938px" width="10" height="10"><rect x="9" y="9" width="1" height="1" fill="#777"/><rect x="9" y="7" width="1" height="1" fill="#777"/><rect x="9" y="5" width="1" height="1" fill="#777"/><rect x="9" y="3" width="1" height="1" fill="#777"/><rect x="9" y="1" width="1" height="1" fill="#777"/><rect x="7" y="9" width="1" height="1" fill="#777"/><rect x="7" y="7" width="1" height="1" fill="#777"/><rect x="7" y="5" width="1" height="1" fill="#777"/><rect x="7" y="3" width="1" height="1" fill="#777"/><rect x="5" y="9" width="1" height="1" fill="#777"/><rect x="5" y="7" width="1" height="1" fill="#777"/><rect x="5" y="5" width="1" height="1" fill="#777"/><rect x="3" y="9" width="1" height="1" fill="#777"/><rect x="3" y="7" width="1" height="1" fill="#777"/><rect x="1" y="9" width="1" height="1" fill="#777"/></svg>
<svg style="left:1006px;top:318px" width="18" height="17"><circle cx="7.8" cy="7" r="6.3" fill="none" stroke="#1d2633" stroke-width="1.6"/><path d="M12.2 11.5L16.2 15.5" stroke="#1d2633" stroke-width="1.8"/><path d="M4.6 7H11" stroke="#1d2633" stroke-width="1.6"/></svg>
<svg style="left:1238px;top:318px" width="18" height="17"><circle cx="7.8" cy="7" r="6.3" fill="none" stroke="#1d2633" stroke-width="1.6"/><path d="M12.2 11.5L16.2 15.5" stroke="#1d2633" stroke-width="1.8"/><path d="M4.6 7H11M7.8 3.8V10.2" stroke="#1d2633" stroke-width="1.6"/></svg>
<div class="a" style="left:1034px;top:325px;width:6px;height:6px;background:#4674ee;border-radius:50%"></div>
<div class="a" style="left:1048px;top:326px;width:26px;height:3.5px;background:#4674ee;border-radius:2px"></div>
<div class="a" style="left:1098px;top:326px;width:116px;height:3.5px;background:#d7d9db;border-radius:2px"></div>
<div class="a" style="left:1223px;top:325px;width:6px;height:6px;background:#8a8f96;border-radius:50%"></div>
<div class="a" style="left:1072px;top:315px;width:26px;height:24px;background:#fff;border:1px solid #dfe3ef;border-radius:8px"></div>
<svg style="left:1077px;top:322px" width="16" height="11"><path d="M5 1L1.5 5.5L5 10M11 1L14.5 5.5L11 10" fill="none" stroke="#4674ee" stroke-width="1.7"/></svg>
</body></html>
